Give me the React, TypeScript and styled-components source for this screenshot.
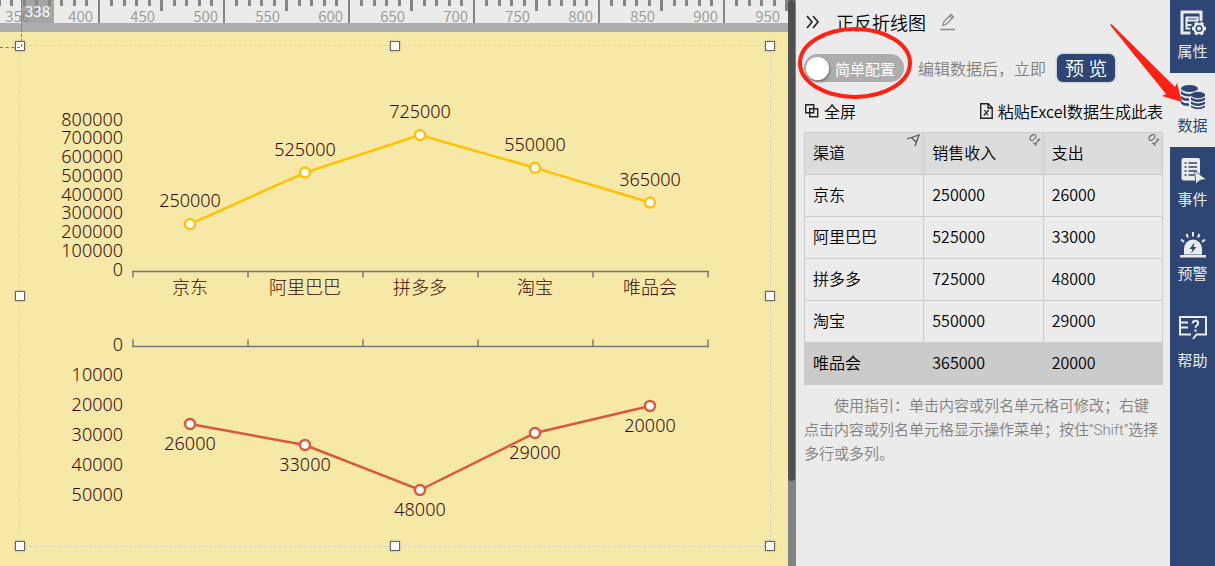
import React from "react";
import styled, { createGlobalStyle, css } from "styled-components";

const sans = `"Noto Sans CJK SC", sans-serif`;
const chartSans = `"Noto Sans", "Noto Sans CJK SC", sans-serif`;
const navy = "#2d4674";

const GlobalStyle = createGlobalStyle`
  * { box-sizing: border-box; }
  body { margin: 0; background: #ebebeb; font-family: ${sans}; font-weight: 350; }
  button, input { font-family: inherit; font-weight: inherit; }
`;

const Page = styled.div`
  position: relative;
  display: flex;
  min-height: 100vh;
`;

const Workspace = styled.main`
  flex: 1;
  min-width: 0;
  background: #f6e8a7;
`;

const RulerBar = styled.div`
  position: relative;
  height: 32px;
  background: #ebebeb;
  border-bottom: 9px solid #adadad;
`;

const RulerScale = styled.svg`
  display: block;
  width: 100%;
  height: 23px;
  overflow: visible;
`;

const PositionBadge = styled.span`
  position: absolute;
  left: 21px;
  top: 0;
  width: 33px;
  height: 23px;
  padding-left: 4px;
  background: rgba(136, 136, 136, 0.7);
  color: #fff;
  font-size: 15px;
  font-weight: 400;
  line-height: 22px;
`;

const GuideX = styled.i`
  position: absolute;
  left: 21px;
  top: 0;
  height: 47px;
  border-left: 1px dashed #777;
`;

const GuideY = styled.i`
  position: absolute;
  left: 0;
  top: 47px;
  width: 20px;
  border-top: 1px dashed #777;
`;

const Selection = styled.section`
  position: relative;
  margin: 13px 17px 19px 19px;
  border: 1px dashed #d3d3d0;
`;

const Handle = styled.i<{ $x: number; $y: number }>`
  position: absolute;
  left: ${(p) => p.$x}%;
  top: ${(p) => p.$y}%;
  width: 10px;
  height: 10px;
  margin: -5px;
  background: #fff;
  border: 1px solid #666;
  box-shadow: 0 0 2px rgba(0, 0, 0, 0.3);
`;

const Plot = styled.svg`
  display: block;
  width: 100%;
  height: auto;
  font-family: ${chartSans};
  font-size: 18px;
  font-weight: 300;
  fill: #3a0808;
`;

const ScrollTrack = styled.div`
  flex: none;
  width: 8px;
  background: #828282;
`;

const ScrollThumb = styled.div`
  width: 7px;
  height: 85vh;
  border-radius: 4px;
  background: #4f4f4f;
`;

const Panel = styled.aside`
  flex: none;
  width: 374px;
  padding: 0 7px 0 8px;
  background: #ebebeb;
  color: #000;
`;

const Row = styled.div<{ $height: number; $spread?: boolean }>`
  display: flex;
  align-items: center;
  height: ${(p) => p.$height}px;
  ${(p) => p.$spread && css`justify-content: space-between; padding-bottom: 4px;`}
`;

const IconButton = styled.button`
  display: inline-flex;
  align-items: center;
  gap: 4px;
  padding: 0;
  border: 0;
  background: none;
  color: #000;
  font-size: 16px;
  line-height: 24px;
  white-space: nowrap;
`;

const Title = styled.h1`
  margin: 0 14px;
  font-size: 18px;
  line-height: 26px;
  font-weight: 350;
`;

const Switch = styled.label`
  display: flex;
  align-items: center;
  height: 28px;
  padding: 0 9px 0 2px;
  gap: 6px;
  border-radius: 14px;
  background: #adadad;
  color: #fff;
  font-size: 15px;
  font-weight: 400;
`;

const SwitchInput = styled.input`
  appearance: none;
  width: 23px;
  height: 23px;
  margin: 0;
  border-radius: 50%;
  background: #fff;
  box-shadow: 1px 2px 3px rgba(0, 0, 0, 0.3);
`;

const Hint = styled.span`
  margin: 0 11px 0 14px;
  color: #808080;
  font-size: 16px;
`;

const PreviewButton = styled.button`
  height: 28px;
  padding: 0 8px;
  border: 0;
  border-radius: 6px;
  background: ${navy};
  color: #fff;
  font-size: 19px;
  line-height: 28px;
  box-shadow: 0 0 3px rgba(0, 0, 0, 0.3);
`;

const DataTable = styled.table`
  width: 100%;
  table-layout: fixed;
  border-collapse: collapse;
  font-size: 16px;
`;

const cell = css`
  position: relative;
  height: 42px;
  padding: 0 8px 4px;
  border: 1px solid #cbcbcb;
  text-align: left;
  font-weight: 350;
`;

const HeadCell = styled.th`
  ${cell}
  background: #dcdcdc;
`;

const Cell = styled.td<{ $selected: boolean }>`
  ${cell}
  ${(p) => p.$selected && css`background: #cbcbcb;`}
`;

const TypeMark = styled.svg`
  position: absolute;
  right: 1px;
  top: 0;
  width: 16px;
  height: 16px;
  overflow: visible;
  font-size: 11px;
  font-family: "Liberation Sans", sans-serif;
  font-weight: 400;
  fill: #555;
`;

const Guide = styled.p`
  margin: 9px 0 0;
  color: #808080;
  font-family: Roboto, "Noto Sans CJK SC", sans-serif;
  font-size: 15px;
  line-height: 24px;
  text-indent: 2em;
`;

const Nav = styled.nav`
  flex: none;
  width: 45px;
  background: ${navy};
`;

const NavButton = styled.button<{ $active?: boolean; $tall?: boolean }>`
  display: flex;
  flex-direction: column;
  align-items: center;
  justify-content: flex-end;
  gap: ${(p) => (p.$tall ? 8 : 4)}px;
  width: 100%;
  height: ${(p) => (p.$tall ? 87 : 74)}px;
  padding: 0 0 11px;
  border: 0;
  background: ${(p) => (p.$active ? "#ebebeb" : navy)};
  color: ${(p) => (p.$active ? navy : "#ebebeb")};
  font-size: 15px;
  line-height: 22px;
  font-weight: 400;
  &:first-child { height: 73px; }
`;

const Annotation = styled.svg<{ $top: number; $right: number }>`
  position: absolute;
  top: ${(p) => p.$top}px;
  right: ${(p) => p.$right}px;
  pointer-events: none;
`;

const ticks = Array.from({ length: 64 }, (_, i) => {
  const height = i % 10 === 8 ? 23 : i % 5 === 3 ? 11 : 6;
  return { x: Math.floor(-2 + i * 12.5), height };
});
const marks = Array.from({ length: 13 }, (_, i) => ({
  value: 350 + i * 50,
  x: Math.round(30 + i * 62.5),
}));

const names = ["京东", "阿里巴巴", "拼多多", "淘宝", "唯品会"];
const income = [250000, 525000, 725000, 550000, 365000];
const cost = [26000, 33000, 48000, 29000, 20000];

const columnX = (i: number) => 170 + i * 115;
const incomeY = (v: number) => 225 - v * 0.0001875;
const costY = (v: number) => 300 + v * 0.003;

function Ruler() {
  return (
    <RulerBar>
      <RulerScale>
        <g fill="#858585">
          {ticks.map((t) => (
            <rect key={t.x} x={t.x} y="0" width={t.height === 23 ? 2 : 3} height={t.height} />
          ))}
        </g>
        <g fill="#999" fontSize="15" fontWeight="350" textAnchor="end">
          {marks.map((m) => (
            <text key={m.value} x={m.x} y="22">{m.value}</text>
          ))}
        </g>
      </RulerScale>
      <PositionBadge>338</PositionBadge>
    </RulerBar>
  );
}

function Series({ values, y, color, labelShift }: {
  values: number[];
  y: (v: number) => number;
  color: string;
  labelShift: number;
}) {
  return (
    <g>
      <polyline
        points={values.map((v, i) => `${columnX(i)},${y(v)}`).join(" ")}
        fill="none" stroke={color} strokeWidth="2.5"
      />
      {values.map((v, i) => (
        <g key={v}>
          <circle cx={columnX(i)} cy={y(v)} r="5" fill="#fff" stroke={color} strokeWidth="2.4" />
          <text x={columnX(i)} y={y(v) + labelShift} textAnchor="middle">{v}</text>
        </g>
      ))}
    </g>
  );
}

function Axis({ y, tick }: { y: number; tick: number }) {
  return (
    <g stroke="#75757a" strokeWidth="1.4">
      <path d={`M112 ${y}H689`} />
      {[0, 1, 2, 3, 4, 5].map((i) => (
        <path key={i} d={`M${113 + i * 115} ${y}v${tick}`} />
      ))}
    </g>
  );
}

function Chart() {
  return (
    <Plot viewBox="0 0 750 500" role="img" aria-label="正反折线图">
      <g textAnchor="end">
        {[0, 1, 2, 3, 4, 5, 6, 7, 8].map((n) => (
          <text key={n} x="103" y={Math.floor(230 - n * 18.75)}>{n * 100000}</text>
        ))}
        {[0, 1, 2, 3, 4, 5].map((n) => (
          <text key={n} x="103" y={305 + n * 30}>{n * 10000}</text>
        ))}
      </g>
      <Axis y={225.5} tick={6} />
      <Axis y={300.5} tick={-7} />
      <g textAnchor="middle">
        {names.map((n, i) => (
          <text key={n} x={columnX(i)} y="248">{n}</text>
        ))}
      </g>
      <Series values={income} y={incomeY} color="#ffc000" labelShift={-17} />
      <Series values={cost} y={costY} color="#d9593a" labelShift={26} />
    </Plot>
  );
}

const handles = [[0, 0], [50, 0], [100, 0], [0, 50], [100, 50], [0, 100], [50, 100], [100, 100]];

const ChevronsIcon = () => (
  <svg width="18" height="16" fill="none" stroke="#222" strokeWidth="1.6">
    <path d="M3 2l5 6-5 6M9 2l5 6-5 6" />
  </svg>
);
const PencilIcon = () => (
  <svg width="16" height="18" fill="none" stroke="#8b8b8b" strokeWidth="1.3">
    <path d="M3 12.500l1-4 7-7 2.500 2.500-7 7zM9.500 3l2.500 2.500M0 16.500h15" />
  </svg>
);
const FullscreenIcon = () => (
  <svg width="16" height="16" fill="none" stroke="#222" strokeWidth="1.4">
    <path d="M1.700 1.700h8v8h-8zM5.700 5.700h8v8h-8z" />
  </svg>
);
const SheetIcon = () => (
  <svg width="15" height="18" fill="none" stroke="#222" strokeWidth="1.4">
    <path d="M1.700 1.700h7.500l4 4v10.600H1.700zM9 1.700v4.300h4" />
    <path d="M5.500 8l3.500 5.500M9.800 8l-5 5.500" strokeWidth="1.200" />
  </svg>
);

const PropertiesIcon = () => (
  <svg width="28" height="26" fill="none" stroke="currentColor" strokeWidth="3">
    <path d="M11.500 23H3V2h19v9" />
    <path d="M8 7.500h10.500v3H8zM7 15h5.500" strokeWidth="2.200" />
    <path d="M7.500 7v11.500h4" strokeWidth="2" />
    <circle cx="20" cy="18.500" r="5.800" fill="currentColor" stroke="none" />
    <path d="M16.500 12.400l7 12.200M23.500 12.400l-7 12.200M13 18.500h14" strokeWidth="3.400" />
    <circle cx="20" cy="18.500" r="2.800" fill="currentColor" stroke={navy} strokeWidth="1.500" />
  </svg>
);
const DataIcon = () => (
  <svg width="28" height="26" fill="currentColor">
    <ellipse cx="10.500" cy="4.500" rx="8.500" ry="3.500" />
    <path d="M2 7q4 4 13 2.500l-4 3q-6 0-9-2.500zM2 12q3 2.500 8 2.500v2.500q-6 0-8-2.500zM2 17q3 2.500 8 2.500v2.500q-6 0-8-2.500z" />
    <ellipse cx="19" cy="11" rx="7.200" ry="3.300" />
    <path d="M12 13.500q7 4 14 0v2.500q-7 4-14 0zM12 17.500q7 4 14 0v2.500q-7 4-14 0zM12 21.500q7 4 14 0v1.800q-7 4-14 0z" />
  </svg>
);
const EventIcon = () => (
  <svg width="28" height="27" fill="currentColor">
    <rect x="2.500" y="1" width="18.500" height="22.500" rx="2" />
    <path d="M5.500 6h2M9.500 6h8.500M5.500 10h2M9.500 10h8.500M5.500 14h2M9.500 14h8.500M5.500 18h2M9.500 18h6" stroke={navy} strokeWidth="1.400" />
    <path d="M15.500 13.500l12 9-6.500.7-4 4z" stroke={navy} strokeWidth="0.800" />
  </svg>
);
const AlarmIcon = () => (
  <svg width="28" height="26" fill="currentColor">
    <path d="M1 23h26v2.500H1zM5 22.500v-6a9 9 0 0118 0v6z" />
    <path d="M14 0v4.500M7.500 2l1.500 3.500M20.500 2L19 5.500M2 7.500l3 2.500M26 7.500l-3 2.500" stroke="currentColor" strokeWidth="2" />
    <path d="M15.500 10.500l-5 6.500h3l-1.500 4.500 5.500-6.500h-3z" fill={navy} />
  </svg>
);
const HelpIcon = () => (
  <svg width="30" height="26" fill="none" stroke="currentColor" strokeWidth="2">
    <path d="M13 19.500H2V2h26v17.500H18.500l-3.500 4.500M2 7.500h8M2 12.500h8" />
    <path d="M14.500 8.500q.3-2.700 3-2.700t2.700 2.500q0 1.400-1.600 2.300-1.100.7-1.100 2.200M17.500 14.500v2.300" />
  </svg>
);

function NumberMark() {
  return (
    <TypeMark viewBox="0 0 16 16">
      <text transform="translate(2 5) rotate(45)">01</text>
    </TypeMark>
  );
}

function TextMark() {
  return (
    <TypeMark viewBox="0 0 16 16">
      <path d="M1 6L13 2L9 13M5.500 4.500l5 5" fill="none" stroke="#555" strokeWidth="1.300" />
    </TypeMark>
  );
}

export default function App() {
  return (
    <>
      <GlobalStyle />
      <Page>
        <Workspace>
          <Ruler />
          <Selection>
            <Chart />
            {handles.map(([x, y]) => (
              <Handle key={`${x}-${y}`} $x={x} $y={y} />
            ))}
          </Selection>
          <GuideX />
          <GuideY />
        </Workspace>
        <ScrollTrack><ScrollThumb /></ScrollTrack>
        <Panel>
          <Row $height={43}>
            <IconButton aria-label="收起"><ChevronsIcon /></IconButton>
            <Title>正反折线图</Title>
            <IconButton aria-label="重命名"><PencilIcon /></IconButton>
          </Row>
          <Row $height={50}>
            <Switch>
              <SwitchInput type="checkbox" />
              简单配置
            </Switch>
            <Hint>编辑数据后，立即</Hint>
            <PreviewButton>预 览</PreviewButton>
          </Row>
          <Row $height={39} $spread>
            <IconButton><FullscreenIcon />全屏</IconButton>
            <IconButton><SheetIcon />粘贴Excel数据生成此表</IconButton>
          </Row>
          <DataTable>
            <thead>
              <tr>
                <HeadCell>渠道<TextMark /></HeadCell>
                <HeadCell>销售收入<NumberMark /></HeadCell>
                <HeadCell>支出<NumberMark /></HeadCell>
              </tr>
            </thead>
            <tbody>
              {names.map((name, i) => (
                <tr key={name}>
                  <Cell $selected={i === 4}>{name}</Cell>
                  <Cell $selected={i === 4}>{income[i]}</Cell>
                  <Cell $selected={i === 4}>{cost[i]}</Cell>
                </tr>
              ))}
            </tbody>
          </DataTable>
          <Guide>
            使用指引：单击内容或列名单元格可修改；右键点击内容或列名单元格显示操作菜单；按住“Shift”选择多行或多列。
          </Guide>
        </Panel>
        <Nav>
          <NavButton><PropertiesIcon />属性</NavButton>
          <NavButton $active><DataIcon />数据</NavButton>
          <NavButton><EventIcon />事件</NavButton>
          <NavButton><AlarmIcon />预警</NavButton>
          <NavButton $tall><HelpIcon />帮助</NavButton>
        </Nav>
        <Annotation $top={22} $right={300} width="120" height="80" fill="none" stroke="#ff2213" strokeWidth="4">
          <ellipse cx="60" cy="41" rx="55" ry="34" />
        </Annotation>
        <Annotation $top={22} $right={31} width="76" height="82" fill="#ff2213">
          <path d="M2 3Q3 1.500 4.500 3L67 65L69 61L74 80L54 74L58 72Z" />
        </Annotation>
      </Page>
    </>
  );
}
